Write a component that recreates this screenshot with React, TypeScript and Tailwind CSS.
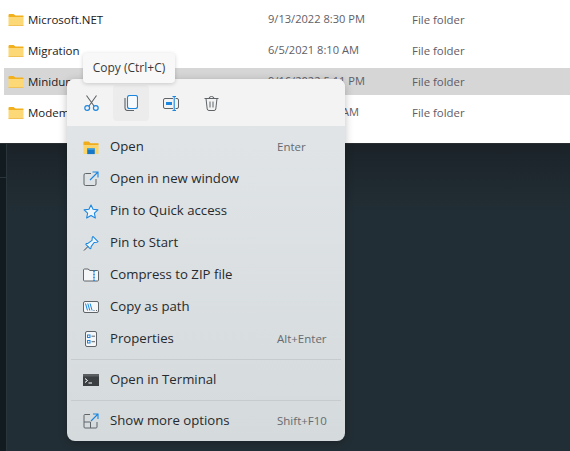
const FONT = "font-['Open_Sans','Noto_Sans',sans-serif]";

function Folder() {
  return (
    <svg width="16" height="14" viewBox="0 0 16 14" className="shrink-0">
      <path d="M0.5 2 Q0.5 1 1.5 1 H5.5 L7.5 2.5 H15 Q15.5 2.5 15.5 3 V4 H0.5 Z" fill="#f2b01e" />
      <path d="M0.5 4 H15.5 V12.5 Q15.5 13 15 13 H1 Q0.5 13 0.5 12.5 Z" fill="#fcd876" />
      <path d="M0.5 12.5 H15.5 V13 H0.5 Z" fill="#e5ad3a" />
    </svg>
  );
}

const rows = [
  ["Microsoft.NET", "9/13/2022 8:30 PM"],
  ["Migration", "6/5/2021 8:10 AM"],
  ["Minidump", "9/16/2022 5:11 PM"],
  ["ModemLogs", "6/5/2021 8:10 AM"],
];

function FileRow({ name, date, selected }: { name: string; date: string; selected: boolean }) {
  return (
    <div className={`ml-1 flex h-[27px] items-center pl-1 ${selected ? "bg-[#d6d6d6]" : ""}`}>
      <Folder />
      <span className="ml-1 w-[240px] text-[11.5px] text-[#1a1a1a]">{name}</span>
      <span className="w-[144px] text-[11.1px] text-[#5f6066]">{date}</span>
      <span className="text-[11.4px] text-[#5f5a66]">File folder</span>
    </div>
  );
}

const S = "#5f6468";
const B = "#1a86e0";

const icons: Record<string, React.ReactNode> = {
  open: (
    <svg width="17" height="15" viewBox="0 0 17 15">
      <path d="M0.5 2 Q0.5 1 1.5 1 H6 L8 3 H16.5 V5 H0.5 Z" fill="#f0ac1a" />
      <path d="M0.5 5 H16.5 V14 Q16.5 14.5 16 14.5 H1 Q0.5 14.5 0.5 14 Z" fill="#fbd568" />
      <rect x="4.5" y="8.5" width="8" height="6" fill="#1678c8" />
      <rect x="4.5" y="8.5" width="8" height="1.5" fill="#3fa0e8" />
    </svg>
  ),
  window: (
    <svg width="16" height="16" viewBox="0 0 16 16" fill="none">
      <path d="M8 2.5 H2.5 Q1 2.5 1 4 V13 Q1 14.5 2.5 14.5 H11.5 Q13 14.5 13 13 V8" stroke={S} />
      <path d="M7 9 L14.5 1.5 M9.5 1 H15 V6.5" stroke={B} strokeWidth="1.1" />
    </svg>
  ),
  star: (
    <svg width="18" height="17" viewBox="0 0 18 17" fill="none">
      <path d="M9 1.2 L11.3 6 L16.8 6.7 L12.8 10.4 L13.9 15.8 L9 13.1 L4.1 15.8 L5.2 10.4 L1.2 6.7 L6.7 6 Z" fill="#eef5fb" stroke={B} strokeWidth="1.2" strokeLinejoin="round" />
    </svg>
  ),
  pin: (
    <svg width="17" height="17" viewBox="0 0 17 17" fill="none">
      <path d="M10.5 1 L16 6.5 L14.8 7.2 L11.8 7.4 L8.6 11.8 L8.4 13.8 L7.5 14 L3 9.5 L3.4 8.6 L5.2 8.4 L9.6 5.2 L9.8 2.2 Z" fill="#eef5fb" stroke={B} strokeWidth="1.1" strokeLinejoin="round" />
      <path d="M5.2 11.8 L1 16" stroke="#3a3f44" />
    </svg>
  ),
  zip: (
    <svg width="16" height="14" viewBox="0 0 16 14" fill="none">
      <path d="M1.5 13 Q0.5 13 0.5 12 V2 Q0.5 1 1.5 1 H5 L7 2.5 H14.5 Q15.5 2.5 15.5 3.5 V12 Q15.5 13 14.5 13 Z" fill="#f4f6f8" stroke={S} />
      <path d="M11 2.5 V13" stroke={B} strokeWidth="1.6" strokeDasharray="2 1" />
    </svg>
  ),
  path: (
    <svg width="16" height="12" viewBox="0 0 16 12" fill="none">
      <rect x="0.5" y="0.5" width="15" height="11" rx="1.5" fill="#f4f6f8" stroke={S} />
      <path d="M2.5 2.5 L4.5 9.5 M4.8 2.5 L6.8 9.5 M7.1 2.5 L9.1 9.5" stroke={B} />
      <path d="M10.5 9.5 H11.5 M13 9.5 H14" stroke={S} />
    </svg>
  ),
  props: (
    <svg width="12" height="16" viewBox="0 0 12 16" fill="none">
      <rect x="0.5" y="0.5" width="11" height="15" rx="1.5" fill="#f4f6f8" stroke={S} />
      <rect x="2.5" y="4" width="2.5" height="2.5" stroke={B} />
      <rect x="2.5" y="9.5" width="2.5" height="2.5" stroke={B} />
      <path d="M6.5 5.2 H10 M6.5 10.7 H10" stroke={S} />
    </svg>
  ),
  term: (
    <svg width="16" height="12" viewBox="0 0 16 12">
      <rect width="16" height="12" fill="#3c3f41" />
      <rect width="16" height="2.5" fill="#5b5e60" />
      <path d="M2 4.5 L4.5 6.5 L2 8.5" stroke="#fff" fill="none" />
      <path d="M5.5 9 H9" stroke="#fff" />
    </svg>
  ),
  more: (
    <svg width="16" height="16" viewBox="0 0 16 16" fill="none">
      <path d="M7 1.5 H2 Q1 1.5 1 2.5 V14 Q1 15 2 15 H13 Q14 15 14 14 V9 M1 9 H7.5 V15" stroke={S} />
      <path d="M8 8 L14.5 1.5 M10 1 H15 V6" stroke={B} strokeWidth="1.1" />
    </svg>
  ),
};

function Item({ icon, label, keys }: { icon: string; label: string; keys?: string }) {
  return (
    <div className="flex h-8 items-center pl-4">
      <span className="flex w-4 justify-center">{icons[icon]}</span>
      <span className="ml-[11px] w-[167px] whitespace-nowrap text-[13.2px] text-[#262a2e]">{label}</span>
      {keys && <span className="whitespace-nowrap text-[11.5px] text-[#666b70]">{keys}</span>}
    </div>
  );
}

function Sep() {
  return <div className="mx-[4px] h-px bg-[#c6cbce]" />;
}

export default function App() {
  return (
    <div className={`relative flex h-[451px] w-[570px] flex-col overflow-hidden ${FONT}`}>
      <div className="flex h-[144px] shrink-0 flex-col gap-1 border-b border-[#2a2e30] bg-white pt-[6px]">
        {rows.map((r, i) => (
          <FileRow key={r[0]} name={r[0]} date={r[1]} selected={i === 2} />
        ))}
      </div>
      <div className="flex flex-1">
        <div className="w-[7px] border-r border-[#2a343b] bg-[#121b20]">
          <div className="mt-[33px] h-px bg-[#2a343b]" />
        </div>
        <div className="flex-1 bg-[linear-gradient(to_bottom,#1b2329_0px,#222e35_70px,#222e35_100%)]" />
      </div>

      <div className="absolute left-[67px] top-[79px] w-[278px] overflow-hidden rounded-lg bg-gradient-to-b from-[#e2e6e8] to-[#d5dadd] shadow-[0_2px_8px_rgba(0,0,0,0.25)]">
        <div className="flex h-[47px] items-start gap-1 bg-[#f3f3f3] pl-[6px] pt-[6px]">
          <div className="flex h-9 w-9 items-center justify-center">
            <svg width="15" height="16" viewBox="0 0 15 16" fill="none">
              <path d="M2.5 0.5 L10 11 M12.5 0.5 L5 11" stroke={S} strokeWidth="1.1" />
              <circle cx="3.2" cy="13" r="2.4" stroke={B} strokeWidth="1.2" />
              <circle cx="11.8" cy="13" r="2.4" stroke={B} strokeWidth="1.2" />
            </svg>
          </div>
          <div className="flex h-9 w-9 items-center justify-center rounded bg-[#ececec]">
            <svg width="14" height="16" viewBox="0 0 14 16" fill="none">
              <path d="M1 3 V13 Q1 15.5 3.5 15.5 H10" stroke={S} strokeWidth="1.1" />
              <rect x="3.5" y="0.5" width="10" height="13" rx="2" fill="#f7fafc" stroke={B} strokeWidth="1.1" />
            </svg>
          </div>
          <div className="flex h-9 w-9 items-center justify-center">
            <svg width="16" height="15" viewBox="0 0 16 15" fill="none">
              <path d="M10 2.5 H2 Q0.5 2.5 0.5 4 V11 Q0.5 12.5 2 12.5 H10 M12.5 2.5 H14 Q15.5 2.5 15.5 4 V11 Q15.5 12.5 14 12.5 H12.5" stroke={S} />
              <rect x="3" y="6" width="6" height="3" fill={B} />
              <path d="M9.5 0.5 H13 M11.2 0.5 V14.5 M9.5 14.5 H13" stroke={B} strokeWidth="1.1" />
            </svg>
          </div>
          <div className="flex h-9 w-9 items-center justify-center">
            <svg width="15" height="15" viewBox="0 0 15 15" fill="none" stroke={S}>
              <path d="M0.5 2.5 H14.5 M5 2.5 Q5 0.5 7.5 0.5 Q10 0.5 10 2.5" />
              <path d="M2 2.5 L3.2 13 Q3.4 14.5 5 14.5 H10 Q11.6 14.5 11.8 13 L13 2.5" />
              <path d="M6 5.5 V11.5 M9 5.5 V11.5" />
            </svg>
          </div>
        </div>
        <div className="pt-[5px] pb-1">
          <Item icon="open" label="Open" keys="Enter" />
          <Item icon="window" label="Open in new window" />
          <Item icon="star" label="Pin to Quick access" />
          <Item icon="pin" label="Pin to Start" />
          <Item icon="zip" label="Compress to ZIP file" />
          <Item icon="path" label="Copy as path" />
          <Item icon="props" label="Properties" keys="Alt+Enter" />
          <div className="py-1"><Sep /></div>
          <Item icon="term" label="Open in Terminal" />
          <div className="py-1"><Sep /></div>
          <Item icon="more" label="Show more options" keys="Shift+F10" />
        </div>
      </div>

      <div className="absolute left-[83px] top-[53px] flex h-[30px] w-[92px] items-center justify-center rounded bg-[#f8f8f8] text-[12px] text-[#3a3a3a] shadow-[0_1px_4px_rgba(0,0,0,0.18)]">
        Copy (Ctrl+C)
      </div>
    </div>
  );
}
